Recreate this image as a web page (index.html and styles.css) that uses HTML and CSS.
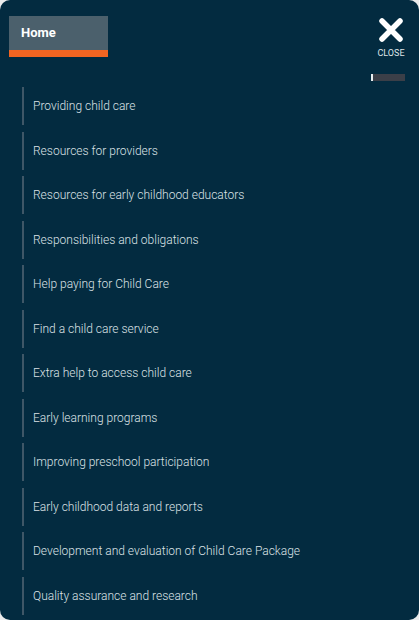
FILE: index.html
```html
<!DOCTYPE html>
<html>
<head>
<meta charset="utf-8">
<link rel="stylesheet" href="styles.css">
</head>
<body>
<div class="panel">
  <div class="top">
    <div class="home-tab"><span>Home</span></div>
    <div class="close">
      <svg width="26" height="26" viewBox="0 0 26 26"><path d="M4 4 L22 22 M22 4 L4 22" stroke="#fff" stroke-width="5.5" stroke-linecap="round"/></svg>
      <span>CLOSE</span>
    </div>
  </div>
  <div class="scroll-row"><div class="scroll"><i></i></div></div>
  <ul class="menu">
    <li>Providing child care</li>
    <li>Resources for providers</li>
    <li>Resources for early childhood educators</li>
    <li>Responsibilities and obligations</li>
    <li>Help paying for Child Care</li>
    <li>Find a child care service</li>
    <li>Extra help to access child care</li>
    <li>Early learning programs</li>
    <li>Improving preschool participation</li>
    <li>Early childhood data and reports</li>
    <li>Development and evaluation of Child Care Package</li>
    <li>Quality assurance and research</li>
  </ul>
</div>
</body>
</html>
```

FILE: styles.css
```css
html, body { margin: 0; padding: 0; background: #ececec; }
body { width: 419px; height: 620px; overflow: hidden; font-family: Roboto, "Liberation Sans", sans-serif; }
.panel { width: 419px; height: 620px; background: #032b40; border-radius: 10px; overflow: hidden; box-sizing: border-box; padding: 16px 0 0 0; }
.top { display: flex; justify-content: space-between; align-items: flex-start; padding: 0 14px 0 9px; height: 41px; }
.home-tab { width: 99px; height: 34px; background: #4b606c; border-bottom: 7px solid #f26522; box-sizing: content-box; display: flex; align-items: center; }
.home-tab span { color: #fff; font-weight: 700; font-size: 13px; padding-left: 12px; margin-top: -1px; }
.close { display: flex; flex-direction: column; align-items: center; width: 28px; }
.close svg { display: block; margin-top: 1px; }
.close span { color: #dfe5e8; font-size: 9px; font-weight: 400; margin-top: 5px; white-space: nowrap; }
.scroll-row { display: flex; justify-content: flex-end; padding-right: 14px; margin-top: 17px; }
.scroll { width: 34px; height: 7px; background: #3b3f48; display: flex; }
.scroll i { width: 2px; background: #e8eef0; }
.menu { list-style: none; margin: 6px 0 0 22px; padding: 0; }
.menu li { border-left: 2px solid #3f5767; height: 38px; margin-bottom: 6.5px; color: #dce2e6; font-size: 12px; font-weight: 300; line-height: 38px; padding-left: 9px; white-space: nowrap; }
```
